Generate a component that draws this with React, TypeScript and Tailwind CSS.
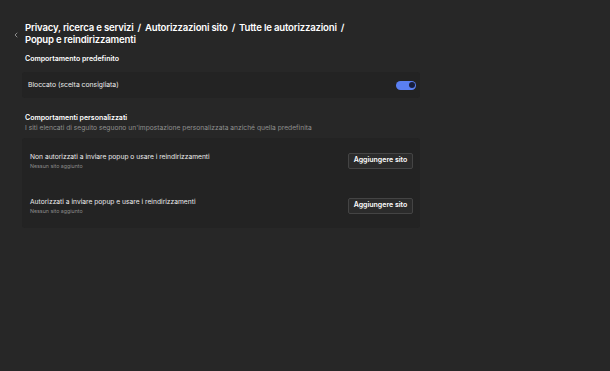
import { ChevronLeft } from 'lucide-react';

function Slash() {
  return <span className="px-[4px]">/</span>;
}

function Row({ title }: { title: string }) {
  return (
    <div className="flex h-[45px] items-center justify-between pl-2 pr-[7px]">
      <div className="flex flex-col">
        <span className="text-[6.7px] leading-[10px] text-[#ececec]">{title}</span>
        <span className="text-[5.3px] leading-[8px] text-[#8a8a8a]">Nessun sito aggiunto</span>
      </div>
      <button className="h-4 w-[65px] rounded-[2px] border border-[#444] bg-[#2b2b2b] text-[7px] font-semibold text-white">
        Aggiungere sito
      </button>
    </div>
  );
}

export default function App() {
  const font = { fontFamily: 'Inter, "Noto Sans", sans-serif' };
  return (
    <div className="h-[371px] w-full bg-[#272727] pt-[22px]" style={font}>
      <div className="flex">
        <div className="w-[25px] pl-[12px] pt-[9px]">
          <ChevronLeft className="h-2 w-2 text-[#a0a0a0]" strokeWidth={2.5} />
        </div>
        <h1 className="whitespace-nowrap text-[9.6px] font-semibold leading-[12px] tracking-[-0.02em] text-white">
          Privacy, ricerca e servizi<Slash />Autorizzazioni sito<Slash />Tutte le autorizzazioni<Slash />
          <br />
          Popup e reindirizzamenti
        </h1>
      </div>
      <div className="ml-[22px] w-[398px]">
        <h2 className="mt-[8px] pl-[3px] text-[7px] font-semibold leading-[10px] text-white">Comportamento predefinito</h2>
        <div className="mt-[8px] flex h-[26px] items-center justify-between rounded-[3px] bg-[#232323] pl-[6px] pr-[4px]">
          <span className="text-[6.8px] text-[#ececec]">Bloccato (scelta consigliata)</span>
          <span className="flex h-[9px] w-5 items-center justify-end rounded-full bg-[#5a7ff2] pr-[1.5px]">
            <span className="h-[6px] w-[6px] rounded-full bg-[#161d3d]" />
          </span>
        </div>
        <h2 className="mt-[15px] pl-[3px] text-[7px] font-semibold leading-[10px] text-white">Comportamenti personalizzati</h2>
        <p className="pl-[3px] text-[6.7px] leading-[10px] text-[#8f8f8f]">
          I siti elencati di seguito seguono un'impostazione personalizzata anziché quella predefinita
        </p>
        <div className="mt-[5px] rounded-[3px] bg-[#232323]">
          <Row title="Non autorizzati a inviare popup o usare i reindirizzamenti" />
          <Row title="Autorizzati a inviare popup e usare i reindirizzamenti" />
        </div>
      </div>
    </div>
  );
}
